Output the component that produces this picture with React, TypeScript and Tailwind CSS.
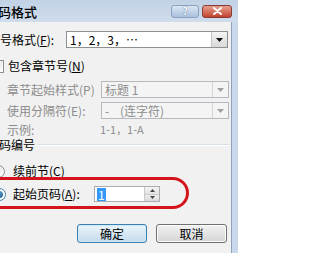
import React from 'react';

const cjk = { fontFamily: '"Noto Sans CJK SC", "Liberation Sans", sans-serif' };

const Arrow = ({ dim }: { dim?: boolean }) => (
  <svg width="7" height="4" viewBox="0 0 7 4">
    <path d="M0 0h7L3.5 4z" fill={dim ? '#a0a0a0' : '#111'} />
  </svg>
);

const Combo = ({ text, dim }: { text: string; dim?: boolean }) => (
  <div
    className={`flex h-[17px] items-stretch border ${
      dim ? 'border-[#b5b9bd] bg-[#f4f4f4] text-[#8d8d8d]' : 'border-[#8e8f8f] bg-white text-black'
    }`}
  >
    <div className="flex-1 pl-[3px] text-[12px] leading-[15px] whitespace-pre">{text}</div>
    <div
      className={`flex w-[16px] items-center justify-center border-l ${
        dim ? 'border-[#d5d5d5] bg-[#f4f4f4]' : 'border-[#c4c4c4] bg-gradient-to-b from-[#f4f4f4] to-[#d9d9d9]'
      }`}
    >
      <Arrow dim={dim} />
    </div>
  </div>
);

export default function App() {
  return (
    <div className="relative h-[253px] w-[238px] overflow-hidden bg-[#c9d8ea]" style={cjk}>
      {/* Title bar */}
      <div className="flex h-[22px] items-center bg-gradient-to-b from-[#c2d2e6] to-[#cfdcec]">
        <div className="-ml-[2px] flex-1 pt-[1px] text-[13px] font-medium text-black">码格式</div>
        <div className="mr-[3px] flex h-[13px] w-[28px] items-center justify-center rounded-[3px] border border-[#8aa2bf] bg-gradient-to-b from-[#dbe6f3] to-[#a9c0dc] text-[10px] font-bold leading-none text-[#f8fbff] [text-shadow:0_0_1px_#2d4d78]">
          ?
        </div>
        <div className="mr-[6px] flex h-[13px] w-[30px] items-center justify-center rounded-[3px] border border-[#8a3b33] bg-gradient-to-b from-[#e5a08f] to-[#c2402d]">
          <svg width="9" height="8" viewBox="0 0 9 8">
            <path d="M1 1l7 6M8 1L1 7" stroke="#fff" strokeWidth="2" strokeLinecap="round" />
          </svg>
        </div>
      </div>

      {/* Body */}
      <div className="mr-[6px] h-[231px] border-r border-[#8ea2b8] bg-[#f1f1f1] text-[12px] text-black">
        {/* Number format */}
        <div className="flex items-center pt-[9px] pr-[3px]">
          <div className="w-[66px] shrink-0 leading-[17px]">号格式(<span className="underline">F</span>):</div>
          <div className="flex-1">
            <Combo text="1，2，3，…" />
          </div>
        </div>

        {/* Include chapter number */}
        <div className="mt-[11px] flex items-center">
          <div className="-ml-[9px] h-[13px] w-[13px] border border-[#8e8f8f] bg-gradient-to-br from-[#dcdcdc] to-white" />
          <div className="ml-[4px] leading-[14px]">包含章节号(<span className="underline">N</span>)</div>
        </div>

        {/* Disabled rows */}
        <div className="mt-[8px] flex items-center pr-[2px] text-[#8d8d8d]">
          <div className="w-[101px] shrink-0 pl-[7px] leading-[17px]">章节起始样式(P)</div>
          <div className="flex-1">
            <Combo text="标题 1" dim />
          </div>
        </div>
        <div className="mt-[4px] flex items-center pr-[2px] text-[#8d8d8d]">
          <div className="w-[101px] shrink-0 pl-[7px] leading-[17px]">使用分隔符(E):</div>
          <div className="flex-1">
            <Combo text={'-    (连字符)'} dim />
          </div>
        </div>
        <div className="mt-[4px] flex items-center text-[#8d8d8d]">
          <div className="w-[100px] shrink-0 pl-[7px] leading-[13px]">示例:</div>
          <div className="text-[11px] leading-[13px]">1-1，1-A</div>
        </div>

        {/* Page numbering section */}
        <div className="mt-[2px] flex items-center">
          <div className="-ml-[1px] leading-[14px]">码编号</div>
          <div className="ml-[3px] mr-[1px] h-0 flex-1 border-t border-b border-t-[#d5dfe5] border-b-white" />
        </div>

        <div className="mt-[12px] flex items-center">
          <div className="-ml-[8px] h-[13px] w-[13px] rounded-full border border-[#8e8f8f] bg-gradient-to-br from-[#dcdcdc] to-white" />
          <div className="ml-[8px] leading-[14px] text-black">续前节(C)</div>
        </div>

        <div className="mt-[8px] flex items-center">
          <div className="-ml-[7px] flex h-[13px] w-[13px] items-center justify-center rounded-full border border-[#3c7fb1] bg-white">
            <div className="h-[7px] w-[7px] rounded-full bg-gradient-to-br from-[#7fc3ef] to-[#1d5a8a]" />
          </div>
          <div className="ml-[7px] w-[81px] shrink-0 leading-[16px]">起始页码(<span className="underline">A</span>):</div>
          <div className="flex h-[16px] w-[66px] items-stretch border border-[#abadb3] bg-white">
            <div className="flex flex-1 items-center pl-[2px]">
              <span className="bg-[#3399ff] px-[1px] text-[12px] leading-[13px] text-white">1</span>
            </div>
            <div className="flex w-[15px] flex-col border-l border-[#c9c9c9]">
              <div className="flex flex-1 items-center justify-center border-b border-[#c9c9c9] bg-gradient-to-b from-[#f4f4f4] to-[#e2e2e2]">
                <svg width="5" height="3" viewBox="0 0 5 3">
                  <path d="M0 3h5L2.5 0z" fill="#444" />
                </svg>
              </div>
              <div className="flex flex-1 items-center justify-center bg-gradient-to-b from-[#eeeeee] to-[#dadada]">
                <svg width="5" height="3" viewBox="0 0 5 3">
                  <path d="M0 0h5L2.5 3z" fill="#444" />
                </svg>
              </div>
            </div>
          </div>
        </div>

        {/* Buttons */}
        <div className="mt-[22px] flex justify-end gap-[9px] pr-[4px]">
          <button className="flex h-[19px] w-[70px] items-center justify-center rounded-[3px] border border-[#3c7fb1] bg-gradient-to-b from-[#eaf6fd] to-[#c5dbeb] text-[12px] leading-none text-black shadow-[inset_0_0_0_1px_#cde8f8]">
            确定
          </button>
          <button className="flex h-[19px] w-[71px] items-center justify-center rounded-[3px] border border-[#707070] bg-gradient-to-b from-[#f2f2f2] to-[#d5d5d5] text-[12px] leading-none text-black shadow-[inset_0_0_0_1px_#fbfbfb]">
            取消
          </button>
        </div>
      </div>

      {/* Red highlight mark */}
      <div className="pointer-events-none absolute left-[-30px] top-[177px] h-[32px] w-[219px] rounded-[16px] border-[3px] border-[#d3141b]" />
    </div>
  );
}
